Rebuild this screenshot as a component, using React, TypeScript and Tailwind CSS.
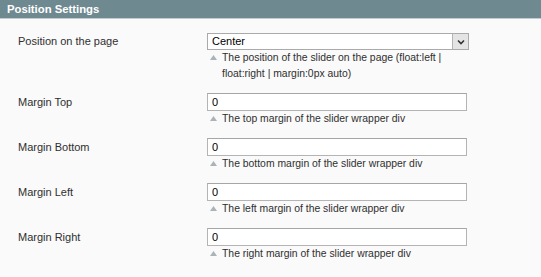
import React from "react";

const rows = [
  { label: "Margin Top", hint: "The top margin of the slider wrapper div" },
  { label: "Margin Bottom", hint: "The bottom margin of the slider wrapper div" },
  { label: "Margin Left", hint: "The left margin of the slider wrapper div" },
  { label: "Margin Right", hint: "The right margin of the slider wrapper div" },
];

function Tri() {
  return (
    <svg width="7" height="5" viewBox="0 0 7 5" className="shrink-0 mr-[5px] mt-[5px]">
      <polygon points="3.5,0 7,5 0,5" fill="#aab4b8" />
    </svg>
  );
}

export default function App() {
  return (
    <div
      className="w-[541px] h-[277px] bg-[#fafafa] overflow-hidden text-[#2f2f2f]"
      style={{ fontFamily: '"Liberation Sans", Arial, sans-serif' }}
    >
      <div className="h-[19px] bg-[#6f8991] border-b border-[#c3cdd0] pl-[7px] text-white font-bold text-[11.3px] leading-[18px]">
        Position Settings
      </div>
      <div className="pt-[14px]">
        <div className="flex h-[60px]">
          <div className="w-[207px] shrink-0 pl-[18px] text-[11px] leading-[17px]">Position on the page</div>
          <div className="w-[262px]">
            <div className="flex h-[17px] border border-[#aaaaaa] bg-white">
              <div className="flex-1 pl-[4px] text-[11px] leading-[15px] text-black">Center</div>
              <div className="w-[16px] h-[15px] bg-[#e4e4e4] border-l border-[#b4b4b4] flex items-center justify-center">
                <svg width="8" height="6" viewBox="0 0 8 6">
                  <path d="M1 1.5 L4 4.5 L7 1.5" stroke="#333" strokeWidth="1.6" fill="none" />
                </svg>
              </div>
            </div>
            <div className="flex pl-[3px] text-[10.4px] leading-[16px] text-[#2f2f2f]">
              <Tri />
              <div className="w-[232px]">The position of the slider on the page (float:left | float:right | margin:0px auto)</div>
            </div>
          </div>
        </div>
        {rows.map((r) => (
          <div key={r.label} className="flex h-[45px]">
            <div className="w-[207px] shrink-0 pl-[18px] text-[11px] leading-[18px]">{r.label}</div>
            <div className="w-[260px]">
              <div className="h-[18px] border border-[#b4b4b4] border-t-[#a6a6a6] bg-white pl-[4px] text-[11px] leading-[16px] text-black">
                0
              </div>
              <div className="flex pl-[3px] text-[10.4px] leading-[16px] text-[#2f2f2f]">
                <Tri />
                <div>{r.hint}</div>
              </div>
            </div>
          </div>
        ))}
      </div>
    </div>
  );
}
